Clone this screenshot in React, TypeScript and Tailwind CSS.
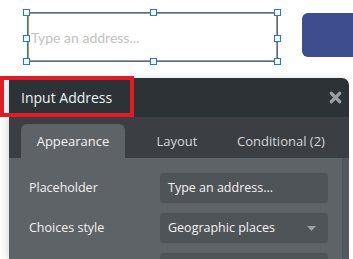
import { X } from 'lucide-react';

const handles = [
  'left-[23px] top-[9px]',
  'left-[150px] top-[9px]',
  'left-[274px] top-[9px]',
  'left-[23px] top-[35px]',
  'left-[274px] top-[35px]',
  'left-[23px] top-[58px]',
  'left-[150px] top-[58px]',
  'left-[274px] top-[58px]',
];

function Field({ label, value, select }: { label: string; value: string; select?: boolean }) {
  return (
    <div className="flex items-center h-[30px]">
      <span className="w-[151px] shrink-0 pl-[20px] text-[12.5px] text-[#f2f2f2]">{label}</span>
      <div className="w-[168px] shrink-0 h-[30px] rounded-[3px] bg-[#4f5458] flex items-center justify-between pl-[8px] pr-[12px] text-[12.5px] text-[#f2f2f2]">
        <span>{value}</span>
        {select && (
          <svg width="9" height="5" viewBox="0 0 9 5">
            <path d="M0 0h9L4.5 5z" fill="#9ea2a8" />
          </svg>
        )}
      </div>
    </div>
  );
}

export default function App() {
  return (
    <div className="relative w-[353px] h-[259px] bg-white overflow-hidden" style={{ fontFamily: '"Open Sans", "Noto Sans", sans-serif' }}>
      {/* canvas */}
      <div className="flex items-start h-[78px] pt-[12px] pl-[27px]">
        <div className="w-[251px] h-[50px] shrink-0 border border-[#1677ff]">
          <div className="w-full h-full border border-[#e08a1e] flex items-center pl-[2px] text-[14px] text-[#c2c2c2]" style={{ fontFamily: 'Lato, sans-serif' }}>
            Type an address...
          </div>
        </div>
        <div className="ml-[24px] mt-[1px] w-[70px] h-[44px] shrink-0 rounded-[6px] bg-[#3d4d8e]" />
      </div>
      {handles.map((h) => (
        <div key={h} className={`absolute ${h} w-[7px] h-[7px] bg-white border border-[#1677ff]`} />
      ))}

      {/* property editor */}
      <div className="ml-[9px] w-[340px] shadow-[-3px_0_6px_rgba(0,0,0,0.12)]">
        <div className="h-[39px] bg-[#2d3236] rounded-tr-[7px] flex items-center justify-between pl-[12px] pr-[5px]">
          <span className="text-[14px] text-[#f0f2f4]">Input Address</span>
          <X size={17} strokeWidth={4.5} className="text-[#9a9fa4]" />
        </div>
        <div className="h-[41px] bg-[#3b3f43] flex items-end pl-[12px]">
          <div className="w-[104px] h-[34px] pt-[2px] rounded-t-[6px] bg-[#5e6367] flex items-center justify-center text-[13px] text-[#f4f4f4]">
            Appearance
          </div>
          <div className="w-[104px] h-[34px] pt-[2px] flex items-center justify-center text-[13px] text-[#d4d6d8]">Layout</div>
          <div className="ml-[8px] h-[34px] pt-[2px] flex items-center text-[13px] text-[#d4d6d8]">Conditional (2)</div>
        </div>
        <div className="h-[101px] bg-[#5e6367] flex">
          <div className="flex-1 flex flex-col gap-[10px] pt-[15px]">
            <Field label="Placeholder" value="Type an address..." />
            <Field label="Choices style" value="Geographic places" select />
            <Field label="" value="" />
          </div>
          <div className="w-[7px] bg-[#53585c]" />
        </div>
      </div>

      {/* highlight annotation */}
      <div className="absolute left-0 top-[76px] w-[134px] h-[41px] border-[4px] border-[#e31b24]" />
    </div>
  );
}
